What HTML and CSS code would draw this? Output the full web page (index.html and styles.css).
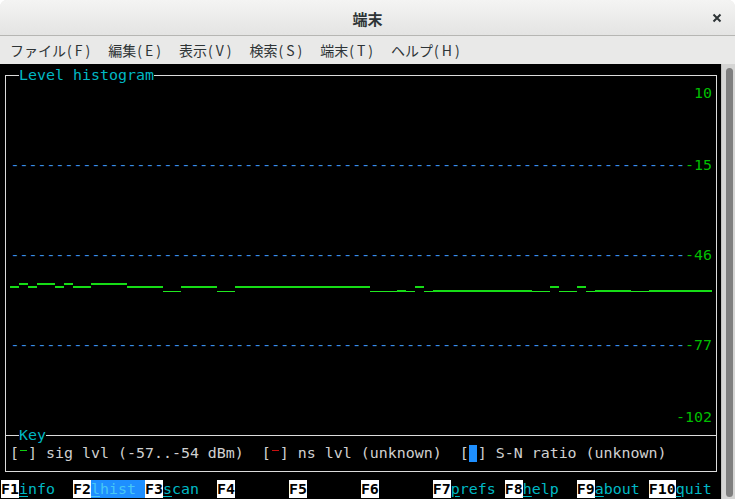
FILE: index.html
```html
<!DOCTYPE html>
<html lang="ja">
<head>
<meta charset="utf-8">
<title>端末</title>
<link rel="stylesheet" href="styles.css">
</head>
<body>
<div class="window">
  <header class="titlebar">
    <span class="title">端末</span>
    <span class="close"><svg width="10" height="10" viewBox="0 0 10 10"><path d="M1.5 1.5 L8.5 8.5 M8.5 1.5 L1.5 8.5" stroke="#2e3436" stroke-width="2" fill="none"/></svg></span>
  </header>
  <nav class="menubar">
    <span class="mi">ファイル<span class="acc">(F)</span></span>
    <span class="mi">編集<span class="acc">(E)</span></span>
    <span class="mi">表示<span class="acc">(V)</span></span>
    <span class="mi">検索<span class="acc">(S)</span></span>
    <span class="mi">端末<span class="acc">(T)</span></span>
    <span class="mi">ヘルプ<span class="acc">(H)</span></span>
  </nav>
  <div class="content">
    <div class="term">
      <div class="frame"><div class="divider"></div></div>
      <div class="r">  <span class="ttl">Level histogram</span></div>
      <div class="r right"><span class="g">10</span></div>
      <div class="r"> </div>
      <div class="r"> </div>
      <div class="r"> </div>
      <div class="r right"><span class="dash">---------------------------------------------------------------------------</span><span class="g">-15</span></div>
      <div class="r"> </div>
      <div class="r"> </div>
      <div class="r"> </div>
      <div class="r"> </div>
      <div class="r right"><span class="dash">---------------------------------------------------------------------------</span><span class="g">-46</span></div>
      <div class="r"> </div>
      <div class="r graphrow"><svg class="graph" width="720" height="18" viewBox="0 0 720 18">
        <g fill="#16dc16">
          <rect x="9" y="4" width="9" height="2"/>
          <rect x="18" y="1" width="9" height="2"/>
          <rect x="27" y="4" width="9" height="2"/>
          <rect x="36" y="1" width="18" height="2"/>
          <rect x="54" y="4" width="9" height="2"/>
          <rect x="63" y="1" width="9" height="2"/>
          <rect x="72" y="4" width="18" height="2"/>
          <rect x="90" y="1" width="36" height="2"/>
          <rect x="126" y="4" width="36" height="2"/>
          <rect x="180" y="4" width="36" height="2"/>
          <rect x="234" y="4" width="135" height="2"/>
          <rect x="396" y="8" width="9" height="2"/>
          <rect x="414" y="4" width="9" height="2"/>
          <rect x="432" y="8" width="99" height="2"/>
          <rect x="549" y="4" width="9" height="2"/>
          <rect x="576" y="4" width="9" height="2"/>
          <rect x="594" y="8" width="36" height="2"/>
          <rect x="648" y="8" width="63" height="2"/>
        </g>
        <g fill="#20e820">
          <rect x="162" y="9" width="18" height="1"/>
          <rect x="216" y="9" width="18" height="1"/>
          <rect x="369" y="9" width="27" height="1"/>
          <rect x="405" y="9" width="9" height="1"/>
          <rect x="423" y="9" width="9" height="1"/>
          <rect x="531" y="9" width="18" height="1"/>
          <rect x="558" y="9" width="18" height="1"/>
          <rect x="585" y="9" width="9" height="1"/>
          <rect x="630" y="9" width="18" height="1"/>
        </g>
      </svg></div>
      <div class="r"> </div>
      <div class="r"> </div>
      <div class="r right"><span class="dash">---------------------------------------------------------------------------</span><span class="g">-77</span></div>
      <div class="r"> </div>
      <div class="r"> </div>
      <div class="r"> </div>
      <div class="r right"><span class="g">-102</span></div>
      <div class="r">  <span class="ttl">Key</span></div>
      <div class="r key"> [<span class="sw sw-green"> </span>] sig lvl (-57..-54 dBm)  [<span class="sw sw-red"> </span>] ns lvl (unknown)  [<span class="sw sw-blue"> </span>] S-N ratio (unknown)</div>
      <div class="r"> </div>
      <div class="r fkeys"><span class="fk">F1</span><span class="lab"><u>i</u>nfo</span>  <span class="fk">F2</span><span class="lab sel"><u>l</u>hist </span><span class="fk">F3</span><span class="lab"><u>s</u>can</span>  <span class="fk">F4</span>      <span class="fk">F5</span>      <span class="fk">F6</span>      <span class="fk">F7</span><span class="lab"><u>p</u>refs</span> <span class="fk">F8</span><span class="lab"><u>h</u>elp</span>  <span class="fk">F9</span><span class="lab"><u>a</u>bout</span> <span class="fk">F10</span><span class="lab"><u>q</u>uit</span></div>
    </div>
    <div class="scrollbar"><div class="thumb"></div></div>
  </div>
</div>
</body>
</html>
```
FILE: styles.css
```css
html, body {
  margin: 0;
  padding: 0;
  background: #ffffff;
}
body {
  width: 735px;
  height: 499px;
  overflow: hidden;
}
.window {
  width: 735px;
  height: 499px;
  display: flex;
  flex-direction: column;
  border-radius: 7px 7px 0 0;
  overflow: hidden;
  background: #e8e8e7;
}
.titlebar {
  height: 35px;
  flex: none;
  border-bottom: 1px solid #b6b6b3;
  background: linear-gradient(#f4f4f3, #e4e4e3);
  display: flex;
  align-items: center;
  justify-content: center;
  position: relative;
  font-family: "Noto Sans CJK JP", "Noto Sans", sans-serif;
}
.title {
  font-size: 15px;
  font-weight: bold;
  color: #2e3436;
  margin-top: 1px;
}
.close {
  position: absolute;
  right: 13px;
  top: 13px;
  width: 10px;
  height: 10px;
  display: flex;
}
.menubar {
  height: 28px;
  flex: none;
  display: flex;
  align-items: center;
  padding-left: 10px;
  gap: 15px;
  background: #e9e9e8;
  font-family: "Noto Sans CJK JP", "Noto Sans", sans-serif;
  font-size: 14px;
  color: #2e3436;
}
.mi {
  white-space: nowrap;
}
.acc {
  letter-spacing: 3px;
  margin-left: 1px;
}
.content {
  flex: 1;
  display: flex;
  min-height: 0;
}
.term {
  width: 720px;
  flex: none;
  padding: 2px 0 0 1px;
  background: #000000;
  position: relative;
  font-family: "DejaVu Sans Mono", monospace;
  font-size: 14.95px;
  color: #d0d0d0;
}
.frame {
  position: absolute;
  left: 5px;
  top: 11px;
  width: 712px;
  height: 397px;
  box-sizing: border-box;
  border: 1px solid #dcdcdc;
}
.divider {
  position: absolute;
  left: 0;
  right: 0;
  top: 359px;
  height: 1px;
  background: #dcdcdc;
}
.r {
  position: relative;
  height: 18px;
  line-height: 18px;
  white-space: pre;
  width: 720px;
}
.r.right {
  box-sizing: border-box;
  text-align: right;
  padding-right: 9px;
}
.ttl {
  background: #000000;
  color: #00b8c4;
}
.g {
  color: #00be00;
}
.dash {
  color: #3a8ee6;
}
.graph {
  display: block;
}
.key {
  color: #d0d0d0;
}
.sw {
  display: inline-block;
  width: 9px;
  height: 18px;
  vertical-align: top;
}
.sw-green {
  background: linear-gradient(#10d010, #10d010) no-repeat 1px 6px / 7px 1px;
}
.sw-red {
  background: linear-gradient(#c81010, #c81010) no-repeat 1px 6px / 7px 1px;
}
.sw-blue {
  background: linear-gradient(#1e8fff, #1e8fff) no-repeat 0 1px / 8px 17px;
}
.fk {
  background: #ffffff;
  color: #000000;
  font-weight: bold;
}
.lab {
  color: #00b8c4;
}
.lab u {
  text-decoration: underline;
  text-underline-offset: 2px;
}
.sel {
  background: #1e8fff;
  color: #48c8f4;
}
.scrollbar {
  width: 14px;
  flex: none;
  box-sizing: border-box;
  background: #d5d5d4;
  border-left: 1px solid #c2c2c0;
  padding: 4px 2px 2px 4px;
}
.thumb {
  width: 7px;
  height: 429px;
  border-radius: 4px;
  background: #7f7f7f;
}
```
